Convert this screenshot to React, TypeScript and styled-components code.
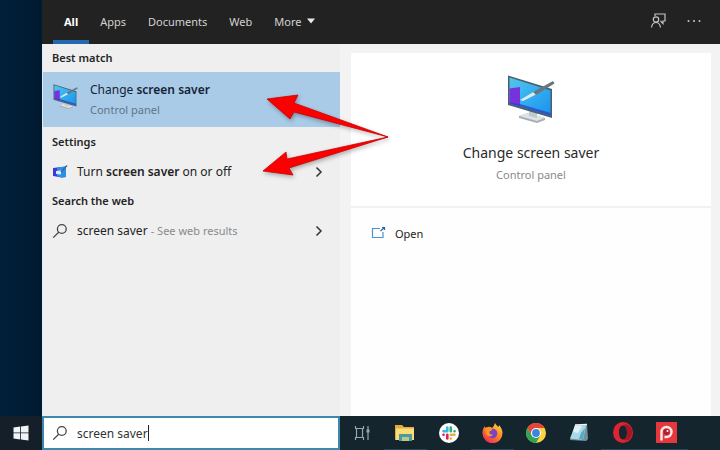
import React, { useState } from "react";
import styled, { createGlobalStyle, css } from "styled-components";

const GlobalStyle = createGlobalStyle`
  * { box-sizing: border-box; }
  body { margin: 0; font-family: "Noto Sans", "Open Sans", sans-serif; font-size: 12px; color: #222; }
  button { font: inherit; color: inherit; background: none; border: 0; padding: 0; text-align: left; cursor: pointer; }
  h1, h2, p { margin: 0; padding: 0; font-weight: 400; }
  svg { display: block; flex: none; }
`;

const Screen = styled.div`
  position: relative;
  display: flex;
  flex-direction: column;
  min-height: 100vh;
  overflow: hidden;
  background: linear-gradient(90deg, #00203a, #001a30 42px);
`;
const Flyout = styled.main`
  flex: 1;
  display: flex;
  flex-direction: column;
  margin-left: 42px;
  background: #f3f3f3;
`;
const Header = styled.header`
  display: flex;
  justify-content: space-between;
  height: 44px;
  padding: 0 19px 0 11px;
  background: #222222;
  color: #d2d2d2;
`;
const Tabs = styled.nav`
  display: flex;
`;
const Tab = styled.button<{ $active?: boolean }>`
  display: flex;
  align-items: center;
  gap: 6px;
  padding: 2px 11px 0;
  font-size: 11px;
  border-bottom: 4px solid transparent;
  ${(p) =>
    p.$active &&
    css`
      color: #fff;
      font-weight: 700;
      border-color: #2668ad;
    `}
`;
const HeaderTools = styled.div`
  display: flex;
  align-items: center;
  gap: 20px;
  padding-bottom: 3px;
`;
const Body = styled.div`
  flex: 1;
  display: grid;
  grid-template-columns: 298px 1fr;
`;
const Results = styled.section`
  background: #efefef;
  border-left: 1px solid #e3edf3;
`;
const GroupTitle = styled.h2`
  padding: 0 9px;
  font-size: 11px;
  font-weight: 600;
  line-height: 30px;
  color: #242424;
  &:first-child { line-height: 28px; }
`;
const ResultRow = styled.button`
  display: flex;
  align-items: center;
  gap: 9px;
  width: 100%;
  height: 29px;
  padding: 0 17px 0 9px;
`;
const BestRow = styled(ResultRow)`
  align-items: flex-start;
  height: 55px;
  padding-top: 8px;
  gap: 12px;
  padding-left: 10px;
  background: #aacbe8;
  color: #142334;
  > svg { margin-top: 4px; }
`;
const RowText = styled.span`
  flex: 1;
  line-height: 20px;
  white-space: nowrap;
  b { font-weight: 600; }
`;
const Sub = styled.small`
  font-size: 11px;
  color: #8a8a8a;
`;
const BestSub = styled.small`
  display: block;
  font-size: 11px;
  color: #5f7487;
`;
const Preview = styled.section`
  display: flex;
  flex-direction: column;
  padding: 9px 9px 0 11px;
  min-width: 0;
`;
const Card = styled.div`
  display: flex;
  flex-direction: column;
  align-items: center;
  height: 155px;
  padding-top: 22px;
  background: #fff;
  border-bottom: 2px solid #f1f1f1;
`;
const CardTitle = styled.h1`
  margin-top: 19px;
  font-size: 14px;
  line-height: 22px;
  color: #2b2b2b;
`;
const CardSub = styled.p`
  font-size: 11px;
  line-height: 22px;
  color: #8a8a8a;
`;
const Actions = styled.div`
  flex: 1;
  padding: 12px 20px;
  background: #fefefe;
`;
const Action = styled.button`
  display: flex;
  align-items: center;
  gap: 9px;
  height: 26px;
  font-size: 11px;
`;
const Taskbar = styled.footer`
  display: flex;
  height: 34px;
  background: #14252d;
`;
const Start = styled.button`
  display: flex;
  align-items: center;
  justify-content: center;
  width: 42px;
  background: #141f29;
`;
const SearchBox = styled.label`
  display: flex;
  align-items: center;
  width: 298px;
  padding-left: 8px;
  background: #fff;
  border: 2px solid #3f87ad;
`;
const SearchInput = styled.input`
  field-sizing: content;
  margin-left: 9px;
  padding: 0;
  border: 0;
  outline: 0;
  background: none;
  font: inherit;
  color: #333;
  caret-color: transparent;
`;
const Caret = styled.span`
  width: 1px;
  height: 16px;
  background: #222;
`;
const Apps = styled.nav`
  display: grid;
  grid-template-columns: repeat(8, 1fr);
  width: 348px;
`;
const AppButton = styled.button<{ $running?: boolean }>`
  display: flex;
  align-items: center;
  justify-content: center;
  border-bottom: 1px solid ${(p) => (p.$running ? "#23475c" : "transparent")};
`;
const Pointers = styled.svg`
  position: absolute;
  left: 256px;
  top: 86px;
  pointer-events: none;
  filter: drop-shadow(1px 2px 2px rgba(0, 0, 0, 0.3));
`;

const Magnifier = () => (
  <svg width="16" height="16" viewBox="0 0 16 16" fill="none" stroke="#454545" strokeWidth="1.3">
    <circle cx="9.8" cy="6" r="4.4" />
    <path d="M6.7 9.2 1.2 14.6" />
  </svg>
);

const Chevron = () => (
  <svg width="8" height="12" viewBox="0 0 8 12" fill="none" stroke="#333" strokeWidth="1.5">
    <path d="M1.5 1.5 6 6l-4.5 4.5" />
  </svg>
);

const Monitor = ({ id, size }: { id: string; size: number }) => (
  <svg width={size} height={size} viewBox="0 0 48 48">
    <defs>
      <linearGradient id={id} x1="0" y1="0" x2="1" y2="1">
        <stop offset="0" stopColor="#55c4ea" />
        <stop offset="0.5" stopColor="#32aef0" />
        <stop offset="1" stopColor="#1c91ed" />
      </linearGradient>
    </defs>
    <path d="m12 41 9-3 17 5v2l-8 3-18-5z" fill="#a6adb4" />
    <path d="m12 41 9-3 17 5-8 3z" fill="#dde2e5" />
    <path d="M22 35h8v8l-8-2z" fill="#c2c9ce" />
    <path d="M1 0.500 45 14v29L1 30z" fill="#49606f" />
    <path d="M2.500 2.500 43.500 15.500v25L2.500 28.500z" fill={`url(#${id})`} />
    <path d="M2.500 13.500 13 12v19.500L2.500 28.500z" fill="#7832dd" />
    <path d="m13 29 30.500 9v2.500L2.500 28.500v-1z" fill="#303fbf" opacity=".75" />
    <path d="m13 25 15-9 2 3-14 7z" fill="#dceaf2" />
    <path d="M26 17 46 6l1.500 2.500L29 20z" fill="#667780" />
  </svg>
);

const MiniMonitor = () => (
  <svg width="16" height="16" viewBox="0 0 16 16">
    <path d="M1 4 14 2.500V13l-4 .5-9-1.500z" fill="#3d39d2" />
    <path d="M5 3.500 14 2.500V13l-5 .5-4-1.500z" fill="#2c8fe6" />
    <path d="m4 7 5-.5v4L4 10z" fill="#cdefff" />
    <path d="m9 8 6-6.500" stroke="#3d6994" strokeWidth="1.3" />
  </svg>
);

const Feedback = () => (
  <svg width="17" height="17" viewBox="0 0 17 17" fill="none" stroke="#c4c4c4" strokeWidth="1.2">
    <path d="M5 4V2h10v7h-2v2.500L10.500 9" />
    <circle cx="6" cy="7.5" r="2.7" />
    <path d="M1.500 15.500C2 12 4 10.500 6 10.500s4 1.500 4.500 5" />
  </svg>
);

const More = () => (
  <svg width="14" height="4" viewBox="0 0 14 4" fill="#c8c8c8">
    <circle cx="1.5" cy="2" r="1" />
    <circle cx="7" cy="2" r="1" />
    <circle cx="12.5" cy="2" r="1" />
  </svg>
);

const OpenIcon = () => (
  <svg width="15" height="14" viewBox="0 0 15 14" fill="none" stroke="#4a93cc" strokeWidth="1.2">
    <path d="M9 2.500H1.500v9H12V6" />
    <path d="m9.500 5 4-3.500M11 1.500h2.500V4" stroke="#2a669b" />
  </svg>
);

const WindowsLogo = () => (
  <svg width="16" height="16" viewBox="0 0 16 16" fill="#f2f5f7">
    <path d="m.5 2.500 6.700-1v6H.5zM8 1.400 15.500.4v7.100H8zM.5 8.300h6.700v6.200l-6.700-1zM8 8.300h7.500v7.300L8 14.600z" />
  </svg>
);

const TaskView = () => (
  <svg width="18" height="16" viewBox="0 0 18 16" fill="none" stroke="#9ba4a9" strokeWidth="1.2">
    <path d="M2.500 1v2.500h8V1M2.500 15v-2.500h8V15M3.500 3.500v9M9.500 3.500v9M15 1v14" />
    <path d="M13.500 4.500h3v3h-3z" fill="#9ba4a9" stroke="none" />
  </svg>
);

const Folder = () => (
  <svg width="20" height="18" viewBox="0 0 20 18">
    <path d="M0 1h7l2 2h10v13H0z" fill="#e2ad3e" />
    <path d="M1 4.500h18V16H1z" fill="#fbdc78" />
    <path d="M4 10h13v7H4z" fill="#4c9b9c" />
    <path d="M7 13h7v4H7z" fill="#b9c98c" />
  </svg>
);

const Slack = () => (
  <svg width="20" height="20" viewBox="0 0 20 20" strokeWidth="2.6" strokeLinecap="round">
    <circle cx="10" cy="10" r="10" fill="#fff" />
    <path d="M8.300 4.500v3.800M4.500 8.300h3.800" stroke="#36b9e2" />
    <path d="M11.800 4.500v3.800M15.500 8.300h.1" stroke="#2fae7d" />
    <path d="M11.800 11.800h3.700M11.800 15.500v.1" stroke="#e7b23a" />
    <path d="M8.300 11.800v3.700M4.500 11.800h.1" stroke="#da2458" />
  </svg>
);

const Firefox = () => (
  <svg width="21" height="20" viewBox="0 0 21 20">
    <defs>
      <linearGradient id="fox" x1="1" y1="0" x2="0.3" y2="1">
        <stop offset="0" stopColor="#ffe14a" />
        <stop offset="0.45" stopColor="#ff9327" />
        <stop offset="1" stopColor="#f02c50" />
      </linearGradient>
    </defs>
    <path d="M13 0c1 2 2 2.500 3.500 4C17 3.500 17 2.500 17 2c2 2 3.500 5 3.500 8a10 10 0 0 1-20 .5C.3 7 1.500 4.500 3 3v2l3-1c1.500-.5 3 0 4 1 1-1 2-2 3-5z" fill="url(#fox)" />
    <circle cx="10.5" cy="10.5" r="4.8" fill="#7843c4" />
    <path d="M3 5c3-1 6 0 7.500 2L7.500 8.500c-.5 2 1 3.500 3.500 3-1.500 3-6 2.500-7-1z" fill="#ff9429" />
  </svg>
);

const Chrome = () => (
  <svg width="20" height="20" viewBox="0 0 20 20">
    <circle cx="10" cy="10" r="10" fill="#ffd23f" />
    <path d="M1.340 5A10 10 0 0 1 18.660 5H10L5.670 12.500z" fill="#e2473a" />
    <path d="M1.340 5A10 10 0 0 0 10 20l4.330-7.500H5.670z" fill="#31a457" />
    <circle cx="10" cy="10" r="5" fill="#fff" />
    <circle cx="10" cy="10" r="3.9" fill="#3f82e6" />
  </svg>
);

const Notepad = () => (
  <svg width="20" height="20" viewBox="0 0 20 20">
    <path d="m6 2 12-1 1 15-2 2-16-1z" fill="#71909e" />
    <path d="M6 2.500h11L14 17 1 15.500z" fill="#a7d9e7" />
    <path d="m6 2.500 7 .5-4 7-5-1z" fill="#dff3f7" />
    <path d="m12 10 4-5-2 12-4-1z" fill="#5ba9c6" />
    <path d="m6 2 12-.5" stroke="#eef3f5" strokeWidth="1.5" />
  </svg>
);

const Opera = () => (
  <svg width="20" height="21" viewBox="0 0 20 21">
    <path fillRule="evenodd" d="M10 0a10 10.500 0 1 0 0 21 10 10.500 0 1 0 0-21zm0 3.500c2.500 0 4 3 4 7s-1.500 7-4 7-4-3-4-7 1.500-7 4-7z" fill="#dd2433" />
    <path d="M10 3.500c2.500 0 4 3 4 7s-1.500 7-4 7c3 2 6 1 8-2 1.500-3 1.500-7 0-10-2-3-5-4-8-2z" fill="#a51728" />
  </svg>
);

const PicPick = () => (
  <svg width="21" height="21" viewBox="0 0 21 21">
    <path d="M0 0h21v21H0z" fill="#e5383d" />
    <path d="M5.500 18.500V10a5 5 0 1 1 5 5H8.500" fill="none" stroke="#fbe9e9" strokeWidth="2.4" />
    <circle cx="10.500" cy="10" r="3" fill="#a82430" />
    <circle cx="11.500" cy="9" r="1" fill="#fff" />
  </svg>
);

const apps = [
  { name: "Task View", Icon: TaskView },
  { name: "File Explorer", Icon: Folder, running: true },
  { name: "Slack", Icon: Slack },
  { name: "Firefox", Icon: Firefox, running: true },
  { name: "Chrome", Icon: Chrome },
  { name: "Notepad", Icon: Notepad },
  { name: "Opera", Icon: Opera, running: true },
  { name: "PicPick", Icon: PicPick, running: true },
];

export default function App() {
  const [query, setQuery] = useState("screen saver");
  return (
    <>
      <GlobalStyle />
      <Screen>
        <Flyout>
          <Header>
            <Tabs>
              <Tab $active>All</Tab>
              <Tab>Apps</Tab>
              <Tab>Documents</Tab>
              <Tab>Web</Tab>
              <Tab>
                More
                <svg width="8" height="6" viewBox="0 0 8 6" fill="#e8e8e8">
                  <path d="M0 .5h8L4 5.500z" />
                </svg>
              </Tab>
            </Tabs>
            <HeaderTools>
              <button aria-label="Feedback"><Feedback /></button>
              <button aria-label="Options"><More /></button>
            </HeaderTools>
          </Header>
          <Body>
            <Results>
              <GroupTitle>Best match</GroupTitle>
              <BestRow>
                <Monitor id="screen-small" size={25} />
                <RowText>
                  Change <b>screen saver</b>
                  <BestSub>Control panel</BestSub>
                </RowText>
              </BestRow>
              <GroupTitle>Settings</GroupTitle>
              <ResultRow>
                <MiniMonitor />
                <RowText>Turn <b>screen saver</b> on or off</RowText>
                <Chevron />
              </ResultRow>
              <GroupTitle>Search the web</GroupTitle>
              <ResultRow>
                <Magnifier />
                <RowText>screen saver <Sub>- See web results</Sub></RowText>
                <Chevron />
              </ResultRow>
            </Results>
            <Preview>
              <Card>
                <Monitor id="screen-large" size={48} />
                <CardTitle>Change screen saver</CardTitle>
                <CardSub>Control panel</CardSub>
              </Card>
              <Actions>
                <Action><OpenIcon />Open</Action>
              </Actions>
            </Preview>
          </Body>
        </Flyout>
        <Taskbar>
          <Start aria-label="Start"><WindowsLogo /></Start>
          <SearchBox>
            <Magnifier />
            <SearchInput aria-label="Search" value={query} onChange={(e) => setQuery(e.target.value)} />
            <Caret />
          </SearchBox>
          <Apps>
            {apps.map(({ name, Icon, running }) => (
              <AppButton key={name} aria-label={name} $running={running}><Icon /></AppButton>
            ))}
          </Apps>
        </Taskbar>
        <Pointers width="136" height="96" viewBox="0 0 136 96" fill="#fb0000" stroke="#c90000" strokeWidth="0.8">
          <path d="M11 13 42 9 38 17 132 51 38 26 34 33z" />
          <path d="M132 51 33 82 37 89 7 85 30 66 31 73z" />
        </Pointers>
      </Screen>
    </>
  );
}
